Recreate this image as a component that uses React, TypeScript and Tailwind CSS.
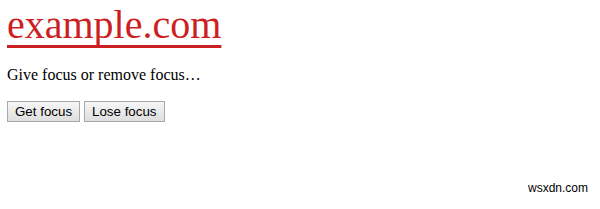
export default function App() {
  return (
    <div className="relative h-[209px] w-[600px] overflow-hidden bg-white font-['Liberation_Serif',serif] text-black">
      <div className="px-[7px] pt-[2px]">
        <a
          href="#"
          className="text-[40px] leading-[46px] text-[#cc1f24] underline decoration-[3px] underline-offset-[7px] [text-decoration-skip-ink:none]"
        >
          example.com
        </a>
        <p className="mt-[18px] text-[16px] leading-[18px]">Give focus or remove focus…</p>
        <div className="mt-[17px] flex gap-[4px] font-['Liberation_Sans',Arial,sans-serif] text-[13.33px]">
          <button className="h-[21px] border border-[#a8a8a8] bg-gradient-to-b from-[#f6f6f6] to-[#dedede] px-[7px] leading-[19px]">
            Get focus
          </button>
          <button className="h-[21px] border border-[#a8a8a8] bg-gradient-to-b from-[#f6f6f6] to-[#dedede] px-[7px] leading-[19px]">
            Lose focus
          </button>
        </div>
      </div>
      <div className="absolute right-[12px] bottom-[12px] font-['Liberation_Sans',Arial,sans-serif] text-[12px] text-black">
        wsxdn.com
      </div>
    </div>
  );
}
